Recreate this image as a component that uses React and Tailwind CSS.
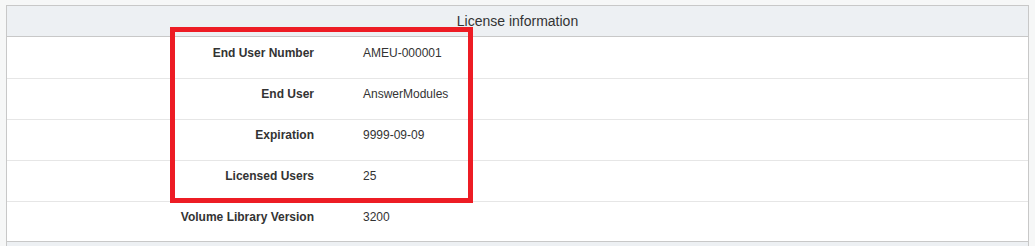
export default function App() {
  const rows = [
    ["End User Number", "AMEU-000001"],
    ["End User", "AnswerModules"],
    ["Expiration", "9999-09-09"],
    ["Licensed Users", "25"],
    ["Volume Library Version", "3200"],
  ];
  return (
    <div
      className="relative w-[1035px] h-[246px] overflow-hidden bg-[#f6f7f7] pt-[5px] pl-[6px] text-[#333333]"
      style={{ fontFamily: '"Liberation Sans", Arial, sans-serif' }}
    >
      <div className="w-[1023px] border border-[#c8c8c8] bg-white">
        <div className="h-[31px] border-b border-[#c8c8c8] bg-[#edf0f3] flex items-center justify-center text-[14px]">
          License information
        </div>
        {rows.map(([k, v], i) => (
          <div
            key={k}
            className={
              i === 0
                ? "h-[42px] border-b border-[#e6e6e6] flex items-start pt-[8px] text-[12px] leading-[17px]"
                : i === rows.length - 1
                ? "h-[39px] flex items-start pt-[7px] text-[12px] leading-[17px]"
                : "h-[41px] border-b border-[#e6e6e6] flex items-start pt-[7px] text-[12px] leading-[17px]"
            }
          >
            <div className="w-[307px] text-right font-bold">{k}</div>
            <div className="ml-[49px]">{v}</div>
          </div>
        ))}
      </div>
      <div className="w-[1023px] h-[20px] border-x border-[#c8c8c8] bg-[#edf0f3]"></div>
      <div className="absolute left-[170px] top-[27px] w-[303px] h-[176px] border-[5px] border-[#ed1c24]"></div>
    </div>
  );
}
